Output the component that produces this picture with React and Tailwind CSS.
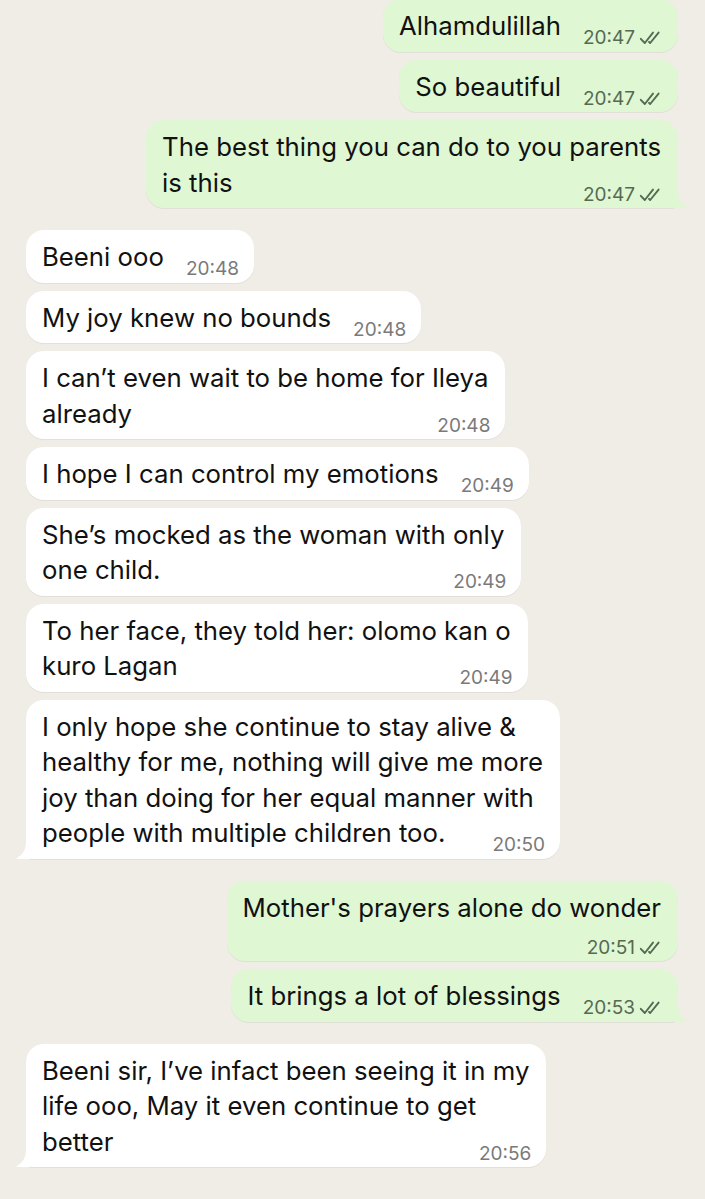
import React from "react";

const messages = [
  { out: true, lines: ["Alhamdulillah"], time: "20:47" },
  { out: true, lines: ["So beautiful"], time: "20:47" },
  { out: true, lines: ["The best thing you can do to you parents", "is this"], time: "20:47", tail: true },
  { out: false, lines: ["Beeni ooo"], time: "20:48", gapTop: true },
  { out: false, lines: ["My joy knew no bounds"], time: "20:48" },
  { out: false, lines: ["I can’t even wait to be home for Ileya", "already"], time: "20:48" },
  { out: false, lines: ["I hope I can control my emotions"], time: "20:49" },
  { out: false, lines: ["She’s mocked as the woman with only", "one child."], time: "20:49" },
  { out: false, lines: ["To her face, they told her: olomo kan o", "kuro Lagan"], time: "20:49" },
  {
    out: false,
    lines: [
      "I only hope she continue to stay alive &",
      "healthy for me, nothing will give me more",
      "joy than doing for her equal manner with",
      "people with multiple children too.",
    ],
    time: "20:50",
    tail: true,
  },
  { out: true, lines: ["Mother's prayers alone do wonder"], time: "20:51", gapTop: true, timeBelow: true },
  { out: true, lines: ["It brings a lot of blessings"], time: "20:53", tail: true },
  {
    out: false,
    lines: ["Beeni sir, I’ve infact been seeing it in my", "life ooo, May it even continue to get", "better"],
    time: "20:56",
    tail: true,
    gapTop: true,
  },
];

const Ticks = () => (
  <svg width="24" height="14" viewBox="0 0 24 14" fill="none" className="inline-block ml-[4px] align-[-1px]">
    <path d="M1.8 7.8 L5.8 12 L14 1.6" stroke="#566a52" strokeWidth="1.9" strokeLinecap="round" strokeLinejoin="round" />
    <path d="M10 10.8 L11.2 12 L19.6 1.6" stroke="#566a52" strokeWidth="1.9" strokeLinecap="round" strokeLinejoin="round" />
  </svg>
);

const Tail = ({ out }) => (
  <svg
    width="15"
    height="18"
    viewBox="0 0 15 18"
    className={
      out
        ? "absolute bottom-0 right-[-11px]"
        : "absolute bottom-0 left-[-11px] -scale-x-100"
    }
  >
    <path d="M0 0 H4 C4 8 6.5 13.5 14 17.4 C10 18.2 5 18 0 18 Z" fill={out ? "#dff7d3" : "#ffffff"} />
  </svg>
);

const Bubble = ({ m }) => {
  const timeCls = m.out ? "text-[#566a52]" : "text-[#7a7a7a]";
  const time = (
    <span className={`${timeCls} text-[19px] leading-[16px] whitespace-nowrap`}>
      {m.time}
      {m.out && <Ticks />}
    </span>
  );
  return (
    <div className={`flex ${m.out ? "justify-end pr-[27px]" : "justify-start pl-[26px]"} ${m.gapTop ? "mt-[22px]" : "mt-[8px]"} first:mt-0`}>
      <div
        className={`relative flow-root rounded-[18px] pl-[16px] pr-[17px] pt-[9px] pb-[8px] text-[25.75px] leading-[35.5px] text-[#111111] shadow-[0_1px_0.5px_rgba(0,0,0,0.06)] ${
          m.out ? "bg-[#dff7d3]" : "bg-white"
        } ${m.tail ? (m.out ? "rounded-br-[6px]" : "rounded-bl-[6px]") : ""}`}
      >
        {m.lines.map((l, i) => (
          <React.Fragment key={i}>
            {i > 0 && <br />}
            {l}
          </React.Fragment>
        ))}
        {m.timeBelow ? (
          <div className="text-right mt-[12px] h-[16px] leading-[16px] -mr-[2px]">{time}</div>
        ) : (
          <span className="float-right ml-[22px] mt-[19px] h-[16px] leading-[16px] -mr-[2px]">{time}</span>
        )}
        {m.tail && <Tail out={m.out} />}
      </div>
    </div>
  );
};

export default function App() {
  return (
    <div
      className="w-[705px] h-[1199px] overflow-hidden bg-[#f0ede6]"
      style={{ fontFamily: "Inter, 'Noto Sans', sans-serif" }}
    >
      <div className="-mt-[1px]">
        {messages.map((m, i) => (
          <Bubble key={i} m={m} />
        ))}
      </div>
    </div>
  );
}
